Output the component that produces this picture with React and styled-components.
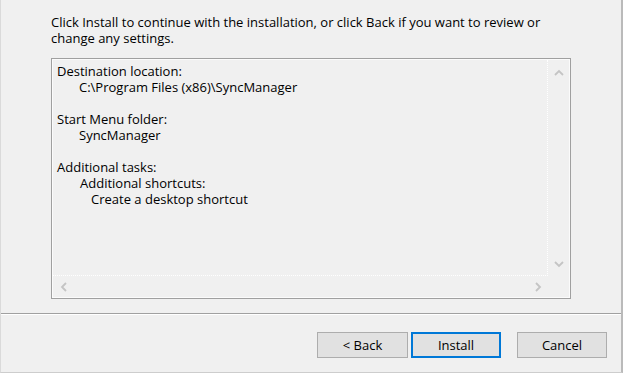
import React from "react";
import styled, { createGlobalStyle } from "styled-components";

const GlobalStyle = createGlobalStyle`
  html, body {
    margin: 0;
    background: #ffffff;
  }
  body {
    font-family: "Open Sans", "Noto Sans", sans-serif;
    font-size: 13px;
    color: #000;
  }
`;

const Window = styled.div`
  width: 623px;
  height: 373px;
  box-sizing: border-box;
  background: #f0f0f0;
  border-left: 1px solid #dadada;
  border-right: 2px solid #bababa;
  border-bottom: 1px solid #cdcdcd;
  display: flex;
  flex-direction: column;
`;

const Page = styled.div`
  height: 314px;
  box-sizing: border-box;
  padding: 14px 50px 0 50px;
  border-bottom: 1px solid #a0a0a0;
`;

const Intro = styled.p`
  margin: 0 0 12px;
  line-height: 16px;
`;

const Memo = styled.div`
  height: 241px;
  box-sizing: border-box;
  border: 1px solid #a0a0a0;
  box-shadow: inset 0 0 0 1px #fbfbfb;
  padding: 1px;
  display: grid;
  grid-template-columns: 1fr 21px;
  grid-template-rows: 1fr 21px;
`;

const MemoText = styled.div`
  border-right: 1px dotted #ffffff;
  border-bottom: 1px dotted #ffffff;
  padding: 3px 4px;
  line-height: 16px;
  overflow: hidden;
`;

const Line = styled.div`
  padding-left: ${(p) => p.$indent || 0}px;
  min-height: 16px;
  white-space: nowrap;
`;

const VScroll = styled.div`
  display: flex;
  flex-direction: column;
  justify-content: space-between;
`;

const HScroll = styled.div`
  display: flex;
  justify-content: space-between;
`;

const ScrollButton = styled.div`
  width: ${(p) => (p.$vertical ? 21 : 21)}px;
  height: ${(p) => (p.$vertical ? 25 : 21)}px;
  display: flex;
  align-items: center;
  justify-content: center;
`;

const Footer = styled.div`
  flex: 1;
  border-top: 1px solid #ffffff;
  display: flex;
  justify-content: flex-end;
  align-items: flex-start;
  padding: 17px 14px 0 0;
`;

const Button = styled.button`
  width: ${(p) => p.$width || 90}px;
  height: 26px;
  margin-left: ${(p) => p.$gap || 0}px;
  box-sizing: border-box;
  background: #e1e1e1;
  border: ${(p) => (p.$default ? "2px solid #0078d7" : "1px solid #adadad")};
  border-radius: 0;
  font-family: "Open Sans", "Noto Sans", sans-serif;
  font-size: 13px;
  color: #000;
  padding: 0;
  line-height: 20px;
`;

function Chevron({ dir }) {
  const rot = { up: 0, down: 180, left: 270, right: 90 }[dir];
  return (
    <svg width="10" height="10" viewBox="0 0 10 10" style={{ transform: `rotate(${rot}deg)` }}>
      <polyline points="1,7 5,3 9,7" fill="none" stroke="#c4c4c4" strokeWidth="1.8" />
    </svg>
  );
}

const lines = [
  { text: "Destination location:" },
  { text: "C:\\Program Files (x86)\\SyncManager", indent: 22 },
  { text: "" },
  { text: "Start Menu folder:" },
  { text: "SyncManager", indent: 22 },
  { text: "" },
  { text: "Additional tasks:" },
  { text: "Additional shortcuts:", indent: 23 },
  { text: "Create a desktop shortcut", indent: 34 },
];

export default function App() {
  return (
    <>
      <GlobalStyle />
      <Window>
        <Page>
          <Intro>
            Click Install to continue with the installation, or click Back if you want to review or change any
            settings.
          </Intro>
          <Memo>
            <MemoText>
              {lines.map((l, i) => (
                <Line key={i} $indent={l.indent}>
                  {l.text}
                </Line>
              ))}
            </MemoText>
            <VScroll>
              <ScrollButton $vertical>
                <Chevron dir="up" />
              </ScrollButton>
              <ScrollButton $vertical>
                <Chevron dir="down" />
              </ScrollButton>
            </VScroll>
            <HScroll>
              <ScrollButton>
                <Chevron dir="left" />
              </ScrollButton>
              <ScrollButton>
                <Chevron dir="right" />
              </ScrollButton>
            </HScroll>
            <div />
          </Memo>
        </Page>
        <Footer>
          <Button $width={91}>&lt; Back</Button>
          <Button $default $gap={3}>
            Install
          </Button>
          <Button $gap={16}>Cancel</Button>
        </Footer>
      </Window>
    </>
  );
}
